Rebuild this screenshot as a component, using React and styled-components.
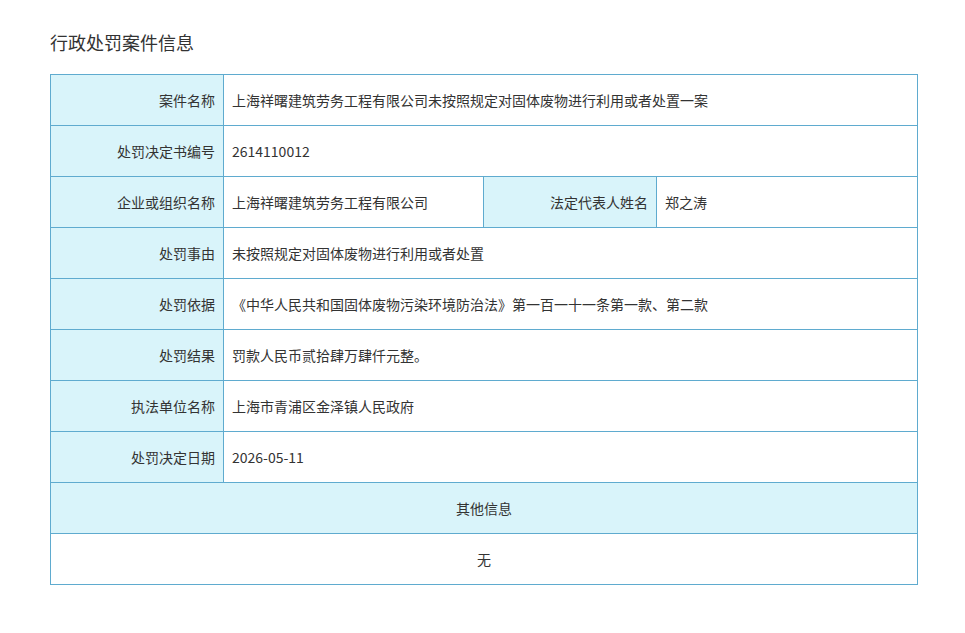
import React from "react";
import styled, { createGlobalStyle } from "styled-components";

const Global = createGlobalStyle`
  body { margin: 0; background: #fff; font-family: "Noto Sans CJK SC", "Liberation Sans", sans-serif; color: #333; }
`;
const Page = styled.div`padding: 30px 48px 0 50px;`;
const Title = styled.h2`margin: 0 0 19px; font-size: 18px; font-weight: 400; line-height: 25px; color: #333;`;
const Table = styled.table`
  width: 868px; border-collapse: collapse; table-layout: fixed; font-size: 14px;
  td { border: 1px solid #5fabcf; height: 50px; padding: 0 8px; color: #333; }
`;
const Label = styled.td`background: #d9f4fa; text-align: right;`;
const Value = styled.td`text-align: ${p => (p.$center ? "center" : "left")}; background: ${p => (p.$head ? "#d9f4fa" : "#fff")};`;

const rows = [
  ["案件名称", "上海祥曙建筑劳务工程有限公司未按照规定对固体废物进行利用或者处置一案"],
  ["处罚决定书编号", "2614110012"],
  null,
  ["处罚事由", "未按照规定对固体废物进行利用或者处置"],
  ["处罚依据", "《中华人民共和国固体废物污染环境防治法》第一百一十一条第一款、第二款"],
  ["处罚结果", "罚款人民币贰拾肆万肆仟元整。"],
  ["执法单位名称", "上海市青浦区金泽镇人民政府"],
  ["处罚决定日期", "2026-05-11"],
];

export default function App() {
  return (
    <Page>
      <Global />
      <Title>行政处罚案件信息</Title>
      <Table>
        <colgroup>
          <col style={{ width: 173 }} /><col style={{ width: 260 }} /><col style={{ width: 173 }} /><col />
        </colgroup>
        <tbody>
          {rows.map((r, i) =>
            r ? (
              <tr key={i}><Label>{r[0]}</Label><Value colSpan={3}>{r[1]}</Value></tr>
            ) : (
              <tr key={i}>
                <Label>企业或组织名称</Label><Value>上海祥曙建筑劳务工程有限公司</Value>
                <Label>法定代表人姓名</Label><Value>郑之涛</Value>
              </tr>
            )
          )}
          <tr><Value colSpan={4} $center $head>其他信息</Value></tr>
          <tr><Value colSpan={4} $center>无</Value></tr>
        </tbody>
      </Table>
    </Page>
  );
}
